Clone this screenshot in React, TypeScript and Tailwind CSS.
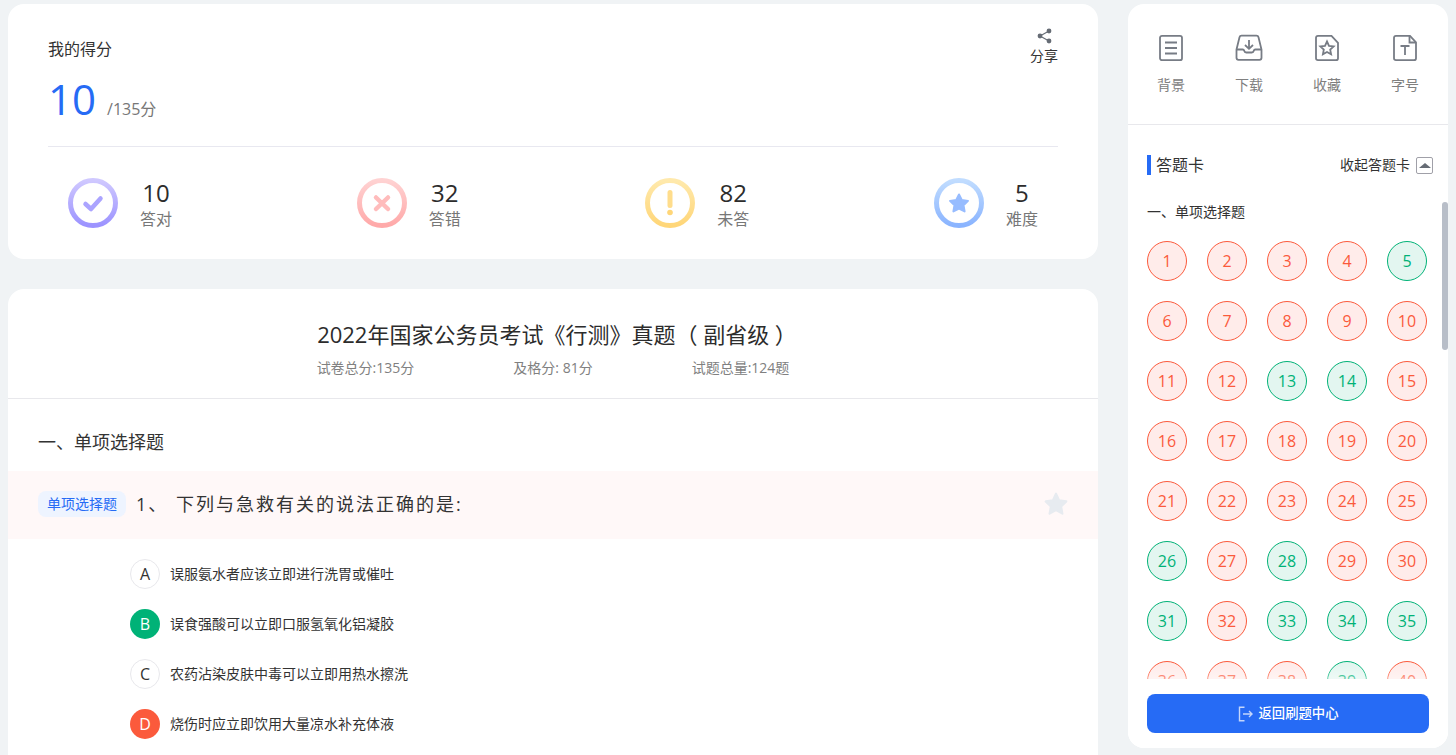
const font = "[font-family:'Open_Sans','Noto_Sans_CJK_SC',sans-serif]";

const greenNumbers = [5, 13, 14, 26, 28, 31, 33, 34, 35, 39];
const numbers = Array.from({ length: 40 }, (_, i) => i + 1);

const StatRing = ({ id, from, to, children }: { id: string; from: string; to: string; children: React.ReactNode }) => (
  <svg width="50" height="50" viewBox="0 0 50 50" fill="none">
    <defs>
      <linearGradient id={id} x1="0" y1="0" x2="0" y2="1">
        <stop offset="0" stopColor={from} />
        <stop offset="1" stopColor={to} />
      </linearGradient>
    </defs>
    <circle cx="25" cy="25" r="22.500" stroke={`url(#${id})`} strokeWidth="5" />
    {children}
  </svg>
);

const stats = [
  {
    value: '10',
    label: '答对',
    icon: (
      <StatRing id="ring-right" from="#cfc8ff" to="#9c93ff">
        <path d="M17.500 26l5.500 5 9.500-10.500" stroke="#aba4ff" strokeWidth="4.500" strokeLinecap="round" strokeLinejoin="round" />
      </StatRing>
    ),
  },
  {
    value: '32',
    label: '答错',
    icon: (
      <StatRing id="ring-wrong" from="#ffd2d2" to="#ffa9a9">
        <path d="M19 19.500l12 11.500M31 19.500l-12 11.500" stroke="#ffbcbc" strokeWidth="4.500" strokeLinecap="round" />
      </StatRing>
    ),
  },
  {
    value: '82',
    label: '未答',
    icon: (
      <StatRing id="ring-blank" from="#ffe9ac" to="#ffd678">
        <path d="M25 14.500v13" stroke="#ffdd8c" strokeWidth="5" strokeLinecap="round" />
        <circle cx="25" cy="34.500" r="2.800" fill="#ffd678" />
      </StatRing>
    ),
  },
  {
    value: '5',
    label: '难度',
    icon: (
      <StatRing id="ring-level" from="#c0dcff" to="#8ab4ff">
        <path
          d="M25 16.500l2.800 5.500 6.200 .9-4.500 4.300 1.100 6.200-5.600-2.900-5.600 2.900 1.100-6.200-4.500-4.300 6.200-.9z"
          fill="#97bcff"
          stroke="#97bcff"
          strokeWidth="2"
          strokeLinejoin="round"
        />
      </StatRing>
    ),
  },
];

const options = [
  { key: 'A', text: '误服氨水者应该立即进行洗胃或催吐', tone: 'plain' },
  { key: 'B', text: '误食强酸可以立即口服氢氧化铝凝胶', tone: 'right' },
  { key: 'C', text: '农药沾染皮肤中毒可以立即用热水擦洗', tone: 'plain' },
  { key: 'D', text: '烧伤时应立即饮用大量凉水补充体液', tone: 'wrong' },
];

const toolIcon = { width: 28, height: 28, viewBox: '0 0 28 28', fill: 'none', stroke: '#777c85', strokeWidth: 1.800 };

const tools = [
  {
    label: '背景',
    icon: (
      <svg {...toolIcon}>
        <rect x="3" y="1.800" width="22" height="24.400" rx="2" />
        <path d="M8 8.500h12M8 14h12M8 19.500h12" />
      </svg>
    ),
  },
  {
    label: '下载',
    icon: (
      <svg {...toolIcon}>
        <path d="M1.500 15.500 4.500 3.200Q4.900 1.700 6.500 1.700h15q1.600 0 2 1.500l3 12.300v8.300q0 2-2 2h-21q-2 0-2-2z" />
        <path d="M1.500 15.500h6.200q1.200 0 1.500 1.300.4 1.700 2 1.700h5.600q1.600 0 2-1.700.3-1.300 1.500-1.300h6.200" />
        <path d="M14 6v8.500M10 11l4 3.800 4-3.800" />
      </svg>
    ),
  },
  {
    label: '收藏',
    icon: (
      <svg {...toolIcon}>
        <path d="M5 1.800h13.500l6.500 7v15.400q0 2-2 2H5q-2 0-2-2V3.800q0-2 2-2z" />
        <path d="M14 7.500l2 4.300 4.700.6-3.500 3.200.9 4.700-4.100-2.300-4.100 2.300.9-4.700-3.500-3.200 4.700-.6z" />
      </svg>
    ),
  },
  {
    label: '字号',
    icon: (
      <svg {...toolIcon}>
        <path d="M5 1.800h14l6 6.500v15.900q0 2-2 2H5q-2 0-2-2V3.800q0-2 2-2z" />
        <path d="M18.500 2v6.500H25" />
        <path d="M9.500 12h9M14 12v9" />
      </svg>
    ),
  },
];

const App = () => {
  return (
    <div className={`${font} flex h-[755px] w-[1456px] gap-[30px] overflow-hidden bg-[#f0f3f5] pl-2 pt-1`}>
      <main className="flex w-[1090px] shrink-0 flex-col gap-[30px]">
        {/* Score card */}
        <section className="relative h-[255px] shrink-0 rounded-2xl bg-white px-10">
          <div className="border-b border-[#e8e8f0] pb-[19px] pt-9">
            <div className="text-base leading-[18px] text-[#333]">我的得分</div>
            <div className="mt-[9px] flex h-[60px] items-end">
              <span className="translate-y-[2px] text-[42px] leading-[60px] text-[#266bf5]">10</span>
              <span className="mb-[7px] ml-[11px] text-base leading-[22px] text-[#777]">/135分</span>
            </div>
          </div>
          <div className="absolute right-10 top-[24px] flex flex-col items-center">
            <svg width="15" height="16" viewBox="0 0 15 16" fill="#666c75">
              <circle cx="12" cy="3" r="2.400" />
              <circle cx="3" cy="8" r="2.400" />
              <circle cx="12" cy="13" r="2.400" />
              <path d="M3 8l9-5M3 8l9 5" stroke="#666c75" strokeWidth="1.200" />
            </svg>
            <span className="mt-[2px] text-sm leading-[20px] text-[#333]">分享</span>
          </div>
          <div className="flex justify-between px-5 pt-[31px]">
            {stats.map((stat) => (
              <div key={stat.label} className="flex w-[104px] items-start justify-between">
                {stat.icon}
                <div className="flex w-8 flex-col items-center">
                  <span className="text-2xl leading-[30px] text-[#2c2c2c]">{stat.value}</span>
                  <span className="whitespace-nowrap text-base leading-[22px] text-[#777]">{stat.label}</span>
                </div>
              </div>
            ))}
          </div>
        </section>

        {/* Paper */}
        <section className="flex-1 rounded-t-2xl bg-white">
          <div className="flex h-[110px] flex-col items-center border-b border-[#e8e8ec] pt-[29px]">
            <h1 className="pl-[8px] text-[22px] leading-[32px] text-[#2c2c2c]">2022年国家公务员考试《行测》真题（ 副省级 ）</h1>
            <div className="mt-[9px] flex gap-[99px] text-sm leading-[18px] text-[#808080]">
              <span>试卷总分:135分</span>
              <span>及格分: 81分</span>
              <span>试题总量:124题</span>
            </div>
          </div>
          <div className="flex h-[72px] items-center pl-[30px] pt-[13px] text-lg text-[#333]">一、单项选择题</div>
          <div className="flex h-[68px] items-center bg-[#fff8f8] pb-[2px] pl-[30px] pr-[29px]">
            <span className="flex h-[26px] w-[88px] items-center justify-center rounded-lg bg-[#eef4ff] text-sm text-[#266bf5]">
              单项选择题
            </span>
            <span className="ml-[10px] text-lg tracking-[1.900px] text-[#333]">1、</span>
            <span className="ml-[8px] flex-1 text-lg tracking-[2px] text-[#333]">下列与急救有关的说法正确的是:</span>
            <svg width="26" height="26" viewBox="0 0 24 24" fill="#e7ebf0" stroke="#e7ebf0" strokeWidth="2" strokeLinejoin="round">
              <path d="M12 2.500l2.900 6.200 6.600.9-4.800 4.600 1.200 6.700-5.900-3.300-5.900 3.300 1.200-6.700-4.800-4.600 6.600-.9z" />
            </svg>
          </div>
          <ul className="flex flex-col gap-5 pl-[122px] pt-5">
            {options.map((option) => (
              <li key={option.key} className="flex h-[30px] items-center gap-[10px] text-sm text-[#333]">
                {option.tone === 'plain' && (
                  <span className="flex h-[30px] w-[30px] items-center justify-center rounded-full border border-[#e8e8ec] text-base">{option.key}</span>
                )}
                {option.tone === 'right' && (
                  <span className="flex h-[30px] w-[30px] items-center justify-center rounded-full bg-[#00b277] text-base text-white">{option.key}</span>
                )}
                {option.tone === 'wrong' && (
                  <span className="flex h-[30px] w-[30px] items-center justify-center rounded-full bg-[#fb5a3c] text-base text-white">{option.key}</span>
                )}
                <span>{option.text}</span>
              </li>
            ))}
          </ul>
        </section>
      </main>

      {/* Answer sheet */}
      <aside className="relative flex h-[744px] w-[320px] shrink-0 flex-col overflow-hidden rounded-2xl bg-white">
        <div className="flex h-[121px] shrink-0 items-start justify-between border-b border-[#e8e8ec] px-[17px] pt-[30px]">
          {tools.map((tool) => (
            <div key={tool.label} className="flex w-[52px] flex-col items-center">
              {tool.icon}
              <span className="mt-[13px] text-sm leading-[20px] text-[#808080]">{tool.label}</span>
            </div>
          ))}
        </div>
        <div className="min-h-0 flex-1 overflow-hidden px-[19px]">
          <div className="mt-[30px] flex h-5 items-center justify-between">
            <span className="border-l-4 border-[#266bf5] pl-[5px] text-base leading-5 text-[#333]">答题卡</span>
            <span className="flex items-center gap-[6px] text-sm text-[#333]">
              收起答题卡
              <span className="mr-[-4px] flex h-[17px] w-[17px] items-center justify-center rounded-[2px] border border-[#a0a0a8]">
                <span className="h-0 w-0 border-x-[6px] border-b-[5px] border-x-transparent border-b-[#666c75]" />
              </span>
            </span>
          </div>
          <div className="mt-[28px] text-sm leading-[18px] text-[#333]">一、单项选择题</div>
          <div className="mt-[20px] grid w-[280px] grid-cols-[repeat(5,40px)] gap-5">
            {numbers.map((n) =>
              greenNumbers.includes(n) ? (
                <span key={n} className="flex h-10 w-10 items-center justify-center rounded-full border border-[#00b277] bg-[#e3f6f0] text-base text-[#00b277]">
                  {n}
                </span>
              ) : (
                <span key={n} className="flex h-10 w-10 items-center justify-center rounded-full border border-[#fb5a3c] bg-[#ffecea] text-base text-[#fb5a3c]">
                  {n}
                </span>
              ),
            )}
          </div>
        </div>
        <div className="absolute right-0 top-[198px] h-[148px] w-[6px] rounded-full bg-[#b8bec8]" />
        <div className="absolute bottom-[69px] left-0 h-[14px] w-full bg-gradient-to-b from-white/0 to-white/40" />
        <div className="h-[69px] shrink-0 bg-white px-[19px] pt-[15px]">
          <button className="flex h-[39px] w-[282px] items-center justify-center gap-[6px] rounded-lg bg-[#266bf5] text-[13.330px] font-medium text-white">
            <svg width="15" height="16" viewBox="0 0 15 16" fill="none" stroke="#c4d6fb" strokeWidth="1.400">
              <path d="M6.500 1.200H1.500v13.600h5" />
              <path d="M5 8h9M11 5l3 3-3 3" />
            </svg>
            返回刷题中心
          </button>
        </div>
      </aside>
    </div>
  );
};

export default App;
